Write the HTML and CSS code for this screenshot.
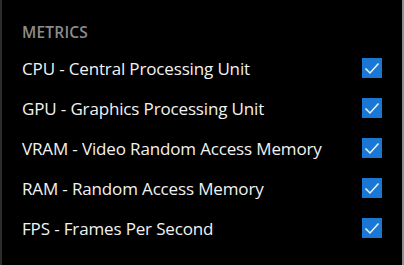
FILE: index.html
```html
<!DOCTYPE html>
<html lang="en">
<head>
    <meta charset="UTF-8">
    <title>Metrics</title>
    <link rel="stylesheet" href="styles.css">
</head>
<body>
    <div id="painel">
        <h2 class="titulo">METRICS</h2>
        <ul id="metricas">
            <li class="item"><span>CPU - Central Processing Unit</span><span class="caixa"><svg viewBox="0 0 20 20"><path d="M3.5 10.5 L8 15 L16.5 5.5"/></svg></span></li>
            <li class="item"><span>GPU - Graphics Processing Unit</span><span class="caixa"><svg viewBox="0 0 20 20"><path d="M3.5 10.5 L8 15 L16.5 5.5"/></svg></span></li>
            <li class="item"><span>VRAM - Video Random Access Memory</span><span class="caixa"><svg viewBox="0 0 20 20"><path d="M3.5 10.5 L8 15 L16.5 5.5"/></svg></span></li>
            <li class="item"><span>RAM - Random Access Memory</span><span class="caixa"><svg viewBox="0 0 20 20"><path d="M3.5 10.5 L8 15 L16.5 5.5"/></svg></span></li>
            <li class="item"><span>FPS - Frames Per Second</span><span class="caixa"><svg viewBox="0 0 20 20"><path d="M3.5 10.5 L8 15 L16.5 5.5"/></svg></span></li>
        </ul>
    </div>
</body>
</html>
```

FILE: styles.css
```css
body {
    margin: 0;
    padding: 0;
    background-color: #000;
    font-family: 'Open Sans', sans-serif;
}

#painel {
    box-sizing: border-box;
    width: 404px;
    height: 265px;
    border-left: 2px solid #2c2c2c;
    border-right: 2px solid #8e8e8e;
    padding: 21px 20px 0 20px;
}

.titulo {
    margin: 0 0 5px 0;
    font-size: 15.5px;
    font-weight: 600;
    color: #8c8c8c;
    letter-spacing: 0.2px;
}

#metricas {
    list-style: none;
    margin: 0;
    padding: 0;
}

.item {
    display: flex;
    justify-content: space-between;
    align-items: center;
    height: 40px;
    font-size: 17px;
    letter-spacing: -0.15px;
    color: #f2f2f2;
}

.caixa {
    width: 20px;
    height: 20px;
    background-color: #1a78d4;
}

.caixa svg {
    display: block;
    width: 20px;
    height: 20px;
    fill: none;
    stroke: #e8f4ff;
    stroke-width: 1.5;
}
```
